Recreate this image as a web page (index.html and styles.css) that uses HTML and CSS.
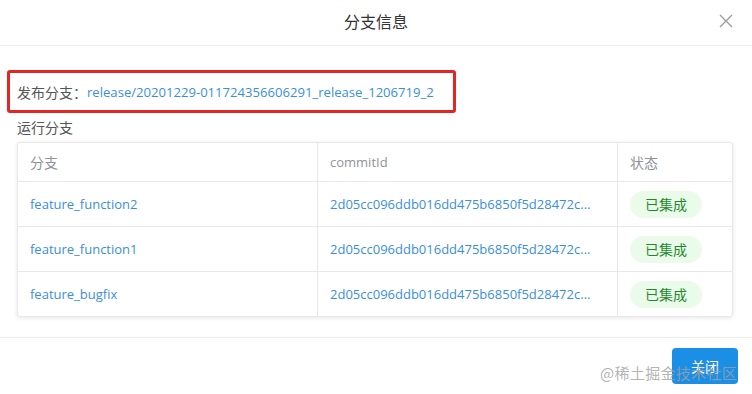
FILE: index.html
```html
<!DOCTYPE html>
<html lang="zh">
<head>
<meta charset="utf-8">
<link rel="stylesheet" href="styles.css">
</head>
<body>
<div class="dialog">
  <header class="dlg-head">
    <span class="dlg-title">分支信息</span>
    <svg class="dlg-close" width="14" height="14" viewBox="0 0 14 14"><path d="M1 1L13 13M13 1L1 13" stroke="#999" stroke-width="1.3" fill="none"/></svg>
  </header>
  <section class="dlg-body">
    <div class="release-box">
      <span class="label">发布分支：</span><span class="link">release/20201229-011724356606291_release_1206719_2</span>
    </div>
    <div class="sub-title">运行分支</div>
    <div class="table">
      <div class="row head">
        <div class="cell cjk">分支</div>
        <div class="cell">commitId</div>
        <div class="cell cjk">状态</div>
      </div>
      <div class="row">
        <div class="cell link">feature_function2</div>
        <div class="cell link">2d05cc096ddb016dd475b6850f5d28472c...</div>
        <div class="cell"><span class="tag">已集成</span></div>
      </div>
      <div class="row">
        <div class="cell link">feature_function1</div>
        <div class="cell link">2d05cc096ddb016dd475b6850f5d28472c...</div>
        <div class="cell"><span class="tag">已集成</span></div>
      </div>
      <div class="row">
        <div class="cell link">feature_bugfix</div>
        <div class="cell link">2d05cc096ddb016dd475b6850f5d28472c...</div>
        <div class="cell"><span class="tag">已集成</span></div>
      </div>
    </div>
  </section>
  <footer class="dlg-foot">
    <button class="btn-primary">关闭</button>
    <span class="watermark">@稀土掘金技术社区</span>
  </footer>
</div>
</body>
</html>
```
FILE: styles.css
```css
* { box-sizing: border-box; }
html, body { margin: 0; padding: 0; background: #fff; }
body {
  font-family: "Open Sans", "Noto Sans CJK SC", sans-serif;
  font-size: 13px;
  color: #555;
  width: 752px;
  height: 394px;
  overflow: hidden;
}
.dialog { position: relative; width: 752px; height: 394px; }
.dlg-head {
  position: relative;
  height: 46px;
  border-bottom: 1px solid #ececec;
  display: flex;
  align-items: center;
  justify-content: center;
}
.dlg-title {
  font-family: "Noto Sans CJK SC", sans-serif;
  font-size: 16px;
  color: #333;
  margin-top: -3px;
}
.dlg-close { position: absolute; right: 19px; top: 14px; }
.dlg-body { padding: 24px 19px 0 17px; }
.release-box {
  margin-left: -10px;
  width: 449px;
  height: 43px;
  border: 3px solid #e52424;
  border-radius: 3px;
  padding-left: 7px;
  display: flex;
  align-items: center;
  font-size: 13.1px;
}
.label {
  font-family: "Noto Sans CJK SC", sans-serif;
  font-size: 14px;
  color: #555;
}
.link { color: #3a8fdc; }
.sub-title {
  font-family: "Noto Sans CJK SC", sans-serif;
  font-size: 14px;
  color: #555;
  margin-top: 4px;
  height: 25px;
  line-height: 20px;
}
.table {
  width: 716px;
  border: 1px solid #e8e8e8;
  border-radius: 3px;
  box-shadow: 0 1px 4px rgba(0,0,0,0.10);
}
.row {
  display: grid;
  grid-template-columns: 299px 300px 1fr;
  height: 45px;
  border-top: 1px solid #e8e8e8;
}
.row.head { height: 38px; border-top: none; }
.cell {
  display: flex;
  align-items: center;
  padding-left: 12px;
  border-left: 1px solid #e8e8e8;
  white-space: nowrap;
  overflow: hidden;
}
.cell:first-child { border-left: none; }
.head .cell { color: #909399; }
.head .cjk {
  font-family: "Noto Sans CJK SC", sans-serif;
  font-size: 14px;
}
.tag {
  display: inline-flex;
  align-items: center;
  justify-content: center;
  width: 72px;
  height: 27px;
  border-radius: 14px;
  background: #ebfbea;
  color: #1e8a2e;
  font-family: "Noto Sans CJK SC", sans-serif;
  font-size: 14px;
}
.dlg-foot {
  position: absolute;
  left: 0;
  right: 0;
  top: 337px;
  border-top: 1px solid #ececec;
  display: flex;
  justify-content: flex-end;
  padding: 10px 14px 0 0;
}
.btn-primary {
  width: 66px;
  height: 36px;
  border: none;
  border-radius: 4px;
  background: #1b8fe6;
  color: #fff;
  font-family: "Noto Sans CJK SC", sans-serif;
  font-size: 14px;
  padding: 0;
}
.watermark {
  position: absolute;
  z-index: 2;
  right: 15px;
  top: 24px;
  font-family: "Noto Sans CJK SC", sans-serif;
  font-size: 15px;
  color: rgba(160,160,160,0.8);
  letter-spacing: 0.3px;
}
```
